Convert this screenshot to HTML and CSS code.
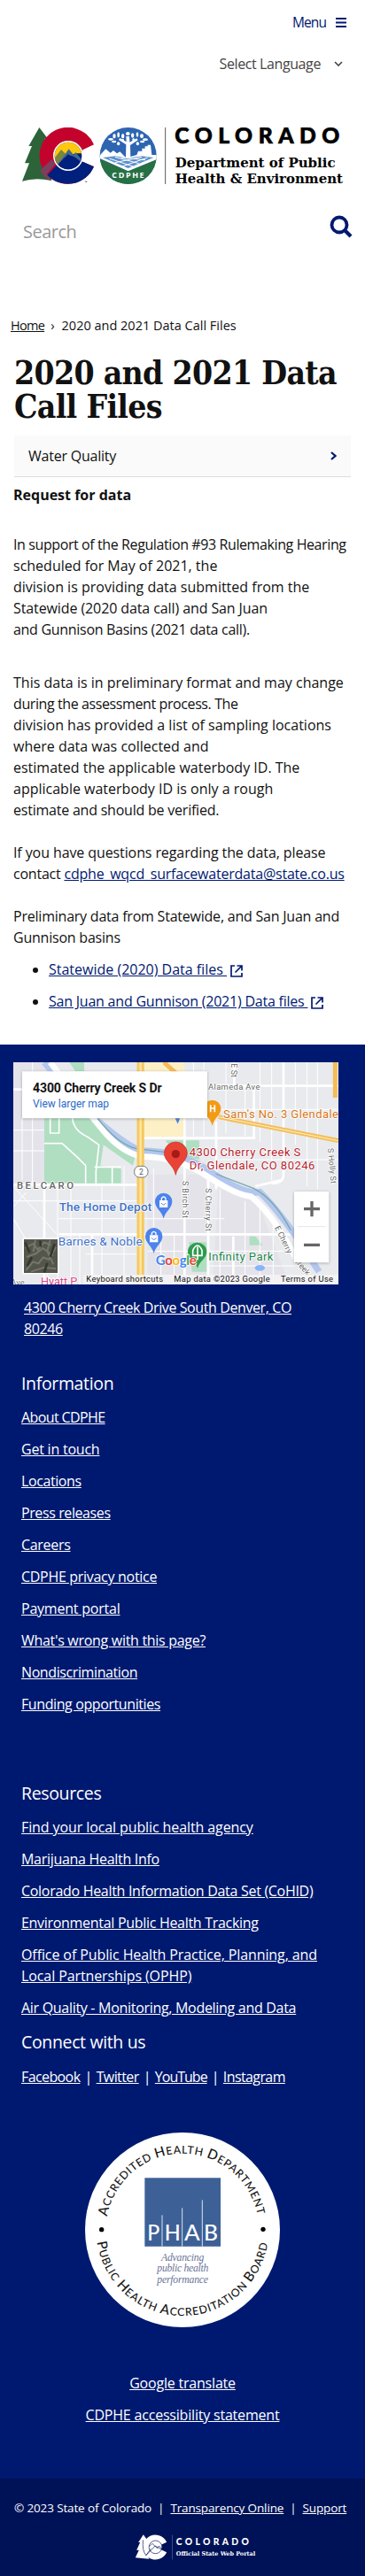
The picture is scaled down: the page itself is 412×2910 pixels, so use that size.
FILE: index.html
```html
<!DOCTYPE html>
<html lang="en">
<head>
<meta charset="utf-8">
<title>2020 and 2021 Data Call Files</title>
<link rel="stylesheet" href="styles.css">
</head>
<body>
<header class="header">
  <div class="menu"><span>Menu</span>
    <svg width="12" height="11" viewBox="0 0 12 11"><path d="M0 1h12M0 5.5h12M0 10h12" stroke="#001970" stroke-width="2"/></svg>
  </div>
  <div class="language"><span>Select Language</span>
    <svg width="10" height="6" viewBox="0 0 10 6"><path d="M1 1l4 4 4-4" fill="none" stroke="#444" stroke-width="1.6"/></svg>
  </div>
  <svg class="logo" viewBox="72 432 1095 195" width="365" height="65">
    <path d="M133 432L162 470 151 470 168 510 159 512 180 560 174 612 Q120 600 75 614L99 553H84L108 495H97Z" fill="#2d6338"/>
    <path d="M318 490A96 96 0 1 0 318 565L275 546L280 508Z" fill="#c4032d"/>
    <path d="M318 565A96 96 0 0 1 160 593L231 520L275 546Z" fill="#00207e"/>
    <path d="M135 578L175 540 187 556 158 590 175 612 155 604Z" fill="#7b405f"/>
    <circle cx="231" cy="528" r="51" fill="#fff"/>
    <clipPath id="sun"><circle cx="231" cy="528" r="46"/></clipPath>
    <g clip-path="url(#sun)"><path d="M180 480h100v100H180z" fill="#00207e"/><path d="M180 470h100v50l-25 0-25 10-50 15z" fill="#fec80d"/><path d="M180 542L207 507 225 524 192 562Z" fill="#79863e"/><path d="M192 562L233 505 250 526 256 516 282 548 270 545 256 534 231 522Z" fill="#416b8d"/><path d="M190 565L231 521 290 568V590H190Z" fill="#00207e"/></g>
    <text x="287" y="621" class="lato" font-size="10">™</text>
    <circle cx="434" cy="528" r="96" fill="#2d65b1"/>
    <clipPath id="seal"><circle cx="434" cy="528" r="96"/></clipPath>
    <g clip-path="url(#seal)">
      <path d="M335 537L434 579 533 537V630H335Z" fill="#267044"/>
      <path d="M340 524L358 505 374 518 384 510 396 520 406 514 426 534 427 490 402 474 406 468 428 481 427 462H438L439 482 463 469 467 475 441 492 442 531 463 525 468 512H481V503H491V496H500V491L510 491 514 525H531V540L434 580 337 536Z" fill="#fff"/>
      <path d="M348 534L434 570 520 534 480 529 434 536 390 529Z" fill="#5d91cc"/>
      <path d="M370 537L450 564M390 532L470 554M410 534L492 542M500 534L414 564M480 532L390 551" stroke="#fff" stroke-width="3"/>
      <g fill="#fff"><ellipse cx="375" cy="472" rx="9" ry="4"/><ellipse cx="387" cy="461" rx="5" ry="8"/><ellipse cx="401" cy="457" rx="4" ry="9"/><ellipse cx="416" cy="461" rx="5" ry="8"/><ellipse cx="433" cy="453" rx="7" ry="6"/><ellipse cx="449" cy="459" rx="5" ry="8"/><ellipse cx="465" cy="456" rx="4" ry="8"/><ellipse cx="480" cy="461" rx="6" ry="7"/><ellipse cx="492" cy="473" rx="9" ry="4"/><ellipse cx="386" cy="480" rx="8" ry="4"/><ellipse cx="401" cy="487" rx="5" ry="6"/><ellipse cx="466" cy="487" rx="5" ry="6"/><ellipse cx="482" cy="480" rx="8" ry="4"/><ellipse cx="416" cy="476" rx="4" ry="6"/><ellipse cx="452" cy="474" rx="4" ry="6"/></g>
    </g>
    <text x="379" y="602" class="sans bold" font-size="27" fill="#fff" textLength="109">CDPHE</text>
    <path d="M560 432V624" stroke="#58595b" stroke-width="3"/>
    <text x="592" y="486" class="lato" font-size="74" stroke="#000" stroke-width="2" textLength="558">COLORADO</text>
    <text x="593" y="566" class="slab" font-size="47" textLength="543" lengthAdjust="spacingAndGlyphs">Department of Public</text>
    <text x="593" y="622" class="slab" font-size="47" textLength="568" lengthAdjust="spacingAndGlyphs">Health &amp; Environment</text>
  </svg>
  <div class="search"><span>Search</span>
    <svg width="26" height="26" viewBox="0 0 26 26"><circle cx="11" cy="11" r="8.5" fill="none" stroke="#001970" stroke-width="3.8"/><path d="M17 17L24 24" stroke="#001970" stroke-width="4.2"/></svg>
  </div>
</header>
<main class="main">
  <nav class="crumbs"><a>Home</a><span class="sep">›</span><span>2020 and 2021 Data Call Files</span></nav>
  <h1 class="title">2020 and 2021 Data<br>Call Files</h1>
  <div class="accordion"><span class="t2">Water Quality</span>
    <svg width="7" height="10" viewBox="0 0 7 10"><path d="M1 1l4.5 4L1 9" fill="none" stroke="#001970" stroke-width="2.2"/></svg>
  </div>
  <h2 class="subtitle">Request for data</h2>
  <p class="para intro"><span class="t4">In support of the Regulation #93 Rulemaking Hearing</span><br>scheduled for May of 2021, the<br>division is providing data submitted from the<br><span class="t1">Statewide (2020 data call) and San Juan</span><br><span class="t3">and Gunnison Basins (2021 data call).</span></p>
  <p class="para">This data is in preliminary format and may change<br><span class="t4">during the assessment process. The</span><br>division has provided a list of sampling locations<br>where data was collected and<br>estimated the applicable waterbody ID. The<br>applicable waterbody ID is only a rough<br><span class="t2">estimate and should be verified.</span></p>
  <p class="para"><span class="t1">If you have questions regarding the data, please</span><br><span class="t2">contact <a class="mail">cdphe_wqcd_surfacewaterdata@state.co.us</a></span></p>
  <p class="para last"><span class="t2">Preliminary data from Statewide, and San Juan and</span><br><span class="t2">Gunnison basins</span></p>
  <ul class="files">
    <li><a>Statewide (2020) Data files&nbsp;</a><svg class="ext" viewBox="0 0 14 14"><path d="M5 1H1V13H13V9M7.5 1H13V6.5M13 1L5.5 8.5" fill="none" stroke="#001970" stroke-width="1.7"/></svg></li>
    <li><a class="t2">San Juan and Gunnison (2021) Data files&nbsp;</a><svg class="ext" viewBox="0 0 14 14"><path d="M5 1H1V13H13V9M7.5 1H13V6.5M13 1L5.5 8.5" fill="none" stroke="#001970" stroke-width="1.7"/></svg></li>
  </ul>
</main>
<footer class="footer">
  <svg class="map" viewBox="45 30 1101 753" width="367" height="251">
    <path d="M45 30h1101v753H45z" fill="#e8eaed"/>
    <path d="M45 30h110L310 230H150V440H45zM500 410H700V783H500zM740 440L860 470 980 783H720z" fill="#e5e3ea"/>
    <path d="M485 30h140v255H485z" fill="#fdf0c7"/>
    <path d="M150 215H300L460 340 450 380 350 310 340 380 410 390V440H280L150 440ZM235 30h50v30h-30zM560 295H675V360L600 345ZM640 640H700V740H650ZM845 620h20l25 30h-45z" fill="#afdec1"/>
    <g stroke="#fff" fill="none">
      <path stroke-width="3" d="M75 220V430M110 30V440M195 440V783M240 450V783M270 610V783M345 440V783M420 380V783M520 390V610M545 610V783M590 610V783M655 30V280M690 30V280M765 30V270M830 110V280M880 30V300M920 30V430M1000 30V310M1040 30V450M1075 30V460M745 460V783M830 500V783M880 500V783M925 560V783M45 260H150M45 330H150M45 500H480M480 560H760M290 680H480M500 670H960M740 190H1146M740 360H1146M200 560H480M700 720H1000M45 450L190 610M45 560L180 783M90 470L45 520"/>
      <path stroke-width="8" d="M150 440V783M312 610V783M625 215V783M732 230V460M705 420V783M793 30V110M790 620V783M860 110V285M960 30V410Q960 440 920 440M45 445H480M200 613H990M485 287H865M740 110H1146M45 122H80M865 450L950 430"/>
      <path stroke-width="5" d="M150 305H210L260 350 290 380V440M245 215Q245 260 300 285L335 310 325 400V440M170 220V270H200V215M320 385H410M380 385V440"/>
    </g>
    <path d="M150 30Q260 170 350 245T480 330Q610 330 720 405T880 470Q970 560 1080 740" fill="none" stroke="#b3c7ee" stroke-width="22"/>
    <path d="M170 30Q290 190 350 262T480 350Q600 350 700 415T850 485Q930 550 1010 710" fill="none" stroke="#fff" stroke-width="20"/>
    <path d="M330 220Q400 308 460 322L560 335M730 408L860 458Q930 495 985 600" fill="none" stroke="#76a6ac" stroke-width="4"/>
    <path d="M476 30V783" stroke="#f6c964" stroke-width="25"/><path d="M476 30V783" stroke="#ffe7a0" stroke-width="7"/>
    <path d="M555 30L610 80M740 215L1146 296M1135 30V150" stroke="#f5bd57" stroke-width="15" fill="none"/><path d="M740 215L1146 296" stroke="#fff2c4" stroke-width="3"/>
    <ellipse cx="880" cy="727" rx="17" ry="10" fill="#8ab4f8"/>
    <rect x="455" y="382" width="46" height="38" rx="17" fill="#fff" stroke="#777" stroke-width="3"/>
    <g class="map-text" stroke="#fff" stroke-width="5" paint-order="stroke" stroke-linejoin="round">
      <text x="471" y="411" font-size="26" fill="#555">2</text>
      <text x="57" y="459" class="medium" font-size="34" fill="#666" textLength="192">BELCARO</text>
      <text x="705" y="123" font-size="28" fill="#666" textLength="175">Alameda Ave</text>
      <text x="756" y="219" font-size="39" fill="#d87516" textLength="390">Sam's No. 3 Glendale</text>
      <text x="641" y="349" font-size="39" fill="#b91c2b" textLength="377">4300 Cherry Creek S</text>
      <text x="641" y="392" font-size="39" fill="#b91c2b" textLength="425">Dr, Glendale, CO 80246</text>
      <text x="200" y="533" class="medium" font-size="41" fill="#3f71c9" textLength="314">The Home Depot</text>
      <text x="197" y="650" font-size="41" fill="#3f71c9" textLength="285">Barnes &amp; Noble</text>
      <text x="706" y="702" font-size="39" fill="#21864b" textLength="219">Infinity Park</text>
      <text x="138" y="786" font-size="38" fill="#d8478b">Hyatt P</text>
      <text transform="translate(617 432) rotate(90)" font-size="27" fill="#666" textLength="126">S Birch St</text>
      <text transform="translate(696 457) rotate(90)" font-size="27" fill="#666" textLength="145">S Cherry St</text>
      <text transform="translate(1110 322) rotate(85)" font-size="27" fill="#666" textLength="120">S Holly St</text>
      <text transform="translate(783 34) rotate(90)" font-size="27" fill="#666">E St</text>
      <text transform="translate(930 590) rotate(64)" font-size="27" fill="#666" textLength="100">E Cherry</text>
      <text transform="translate(993 702) rotate(48)" font-size="27" fill="#666">Creek</text>
      <text x="37" y="785" font-size="28" fill="#777">Ave</text>
    </g>
    <path d="M595 412C590 380 556 365 556 338A39 38 0 0 1 634 338C634 365 600 380 595 412Z" fill="#e94335" stroke="#c9302a" stroke-width="2"/><circle cx="595" cy="341" r="14" fill="#a51c16"/>
    <g fill="#4c83ec"><path d="M554 560C548 535 525 525 525 502A29 29 0 0 1 583 502C583 525 560 535 554 560ZM521 678C515 652 492 642 492 620A29 29 0 0 1 550 620C550 642 527 652 521 678ZM591 215h20l-9 24z"/></g>
    <g fill="#fff"><path d="M540 498h28v24h-28zM507 616h28v24h-28z"/><path d="M547 498v-7q7-10 14 0v7M514 616v-7q7-10 14 0v7" fill="none" stroke="#fff" stroke-width="4"/></g>
    <path d="M546 507q8 12 16 0M513 625q8 12 16 0" fill="none" stroke="#4c83ec" stroke-width="3"/>
    <path d="M719 246C713 218 690 210 690 187A29 29 0 0 1 748 187C748 210 725 218 719 246Z" fill="#f39b14"/><path d="M713 175v24M727 175v24M711 186h18" stroke="#fff" stroke-width="5"/>
    <path d="M669 728C662 703 636 695 636 672A32 31 0 0 1 700 672C700 695 676 703 669 728Z" fill="#2d9b4d"/><path d="M669 700V655M653 685v-18q16-32 31 0v18z" fill="none" stroke="#fff" stroke-width="5"/>
    <text x="527" y="716" class="google" font-size="45" textLength="138" stroke="#fff" stroke-width="4" paint-order="stroke"><tspan fill="#4285f4">G</tspan><tspan fill="#ea4335">o</tspan><tspan fill="#fbbc05">o</tspan><tspan fill="#4285f4">g</tspan><tspan fill="#34a853">l</tspan><tspan fill="#ea4335">e</tspan></text>
    <path d="M75 61h627v159H75z" fill="#fff" class="shadow"/>
    <text x="111" y="132" class="map-text bold" font-size="42" textLength="437" fill="#111">4300 Cherry Creek S Dr</text>
    <text x="111" y="183" class="map-text" font-size="36" textLength="258" fill="#2a68c8">View larger map</text>
    <path d="M996 468h118v241H996z" fill="#fff" class="shadow"/><path d="M1008 587h94" stroke="#e6e6e6" stroke-width="3"/><path d="M1029 527h54M1056 501v52M1029 649h54" stroke="#666" stroke-width="10"/>
    <path d="M76 625h124v123H76z" fill="#fff"/><path d="M81 630h114v114H81z" fill="#55564b"/>
    <path d="M88 735L112 706 130 712 146 691 165 698 190 656M85 660L112 645 128 665 150 640 173 650M90 690L122 678 145 660 180 685M105 740L150 725 190 730M120 632L113 672M170 632L160 670 181 715" stroke="#76776c" stroke-width="6" fill="none"/><path d="M85 640L100 675M136 635L138 655M185 645L170 690M92 720L108 690M150 742L160 710" stroke="#34382f" stroke-width="8"/>
    <path d="M283 750h863v33H283z" fill="#f4f4f5" opacity=".88"/>
    <g class="map-text" font-size="28" fill="#111"><text x="292" y="773" textLength="260">Keyboard shortcuts</text><text x="589" y="773" textLength="325">Map data ©2023 Google</text><text x="951" y="773" textLength="177">Terms of Use</text></g>
  </svg>
  <a class="address t4">4300 Cherry Creek Drive South Denver, CO<br>80246</a>
  <section class="links info">
    <h3>Information</h3>
    <a class="t6">About CDPHE</a><a class="t2">Get in touch</a><a class="t4">Locations</a><a class="t4">Press releases</a><a class="t3">Careers</a><a class="t3">CDPHE privacy notice</a><a class="t2">Payment portal</a><a class="t3">What's wrong with this page?</a><a class="t4">Nondiscrimination</a><a class="t4">Funding opportunities</a>
  </section>
  <section class="links resources">
    <h3>Resources</h3>
    <a class="t1">Find your local public health agency</a><a class="t3">Marijuana Health Info</a><a class="t3">Colorado Health Information Data Set (CoHID)</a><a class="t3">Environmental Public Health Tracking</a><a class="t1">Office of Public Health Practice, Planning, and<br>Local Partnerships (OPHP)</a><a class="t3">Air Quality - Monitoring, Modeling and Data</a>
  </section>
  <section class="connect">
    <h3>Connect with us</h3>
    <div class="social"><a>Facebook</a><i>|</i><a>Twitter</a><i>|</i><a class="narrow">YouTube</a><i>|</i><a>Instagram</a></div>
  </section>
  <svg class="phab" viewBox="78 87 660 660" width="220" height="220">
    <circle cx="408" cy="417" r="330" fill="#fff"/>
    <path id="arc-top" d="M153 372A259 259 0 0 1 663 372" fill="none"/>
    <path id="arc-bottom" d="M119 458A292 292 0 0 0 697 458" fill="none"/>
    <g class="lato-regular" fill="#171717">
      <text font-size="37"><textPath href="#arc-top" textLength="716"><tspan font-size="46">A</tspan>CCREDITED <tspan font-size="46">H</tspan>EALTH <tspan font-size="46">D</tspan>EPARTMENT</textPath></text>
      <text font-size="37"><textPath href="#arc-bottom" textLength="828"><tspan font-size="46">P</tspan>UBLIC <tspan font-size="46">H</tspan>EALTH <tspan font-size="46">A</tspan>CCREDITATION <tspan font-size="46">B</tspan>OARD</textPath></text>
    </g>
    <circle cx="134" cy="416" r="8"/><circle cx="681" cy="415" r="8"/>
    <path d="M280 241h257v232H280z" fill="#3d6197"/>
    <path d="M339 367V473M407 343V473M475 316V473" stroke="#d8e1ee" stroke-width="3"/>
    <g class="lato-regular" fill="#fff" font-size="73"><text x="289" y="453" textLength="42" lengthAdjust="spacingAndGlyphs">P</text><text x="347" y="453" textLength="54" lengthAdjust="spacingAndGlyphs">H</text><text x="414" y="453" textLength="53" lengthAdjust="spacingAndGlyphs">A</text><text x="480" y="453" textLength="48" lengthAdjust="spacingAndGlyphs">B</text></g>
    <g class="motto" font-size="35"><text x="336" y="521" textLength="145">Advancing</text><text x="322" y="559" textLength="174">public health</text><text x="322" y="597" textLength="173">performance</text></g>
  </svg>
  <div class="extra"><a>Google translate</a><a>CDPHE accessibility statement</a></div>
  <div class="bottom">
    <div class="copyright"><span>© 2023 State of Colorado</span><i>|</i><a>Transparency Online</a><i>|</i><a>Support</a></div>
    <svg class="portal" viewBox="456 611 410 87" width="137" height="29">
      <path d="M485 612L500 633 491 670 505 694 458 690 470 664H462L474 638H468Z" fill="#fff"/>
      <path d="M564 637A42 42 0 1 0 564 672L545 663V646Z" fill="#fff"/>
      <circle cx="526" cy="654" r="22" fill="#fff" stroke="#001257" stroke-width="2"/><path d="M484 630Q480 665 494 682L525 650 547 662M505 652L515 642 532 658 538 650 548 660M494 682L510 660" fill="none" stroke="#001257" stroke-width="2"/>
      <path d="M583 613V696" stroke="#59658f" stroke-width="2"/>
      <text x="596" y="647" class="lato" font-size="31" fill="#fff" textLength="246">COLORADO</text>
      <text x="596" y="682" class="slab" font-size="20" fill="#fff" textLength="268" lengthAdjust="spacingAndGlyphs">Official State Web Portal</text>
    </svg>
  </div>
</footer>
</body>
</html>
```

FILE: styles.css
```css
* { box-sizing: border-box; }
body { margin: 0; width: 412px; background: #fff; color: #111; font: 16px/24px "Open Sans", "Noto Sans", sans-serif; white-space: nowrap; }
svg { display: block; flex: none; }
h1, h2, h3, p, ul { margin: 0; padding: 0; }
i { font-style: normal; }

.t1 { letter-spacing: -.1px; }
.t2 { letter-spacing: -.22px; }
.t3 { letter-spacing: -.3px; }
.t4 { letter-spacing: -.4px; }
.t6 { letter-spacing: -.6px; }

.lato { font-family: Lato, sans-serif; font-weight: 900; }
.lato-regular { font-family: Lato, sans-serif; font-weight: 500; }
.slab { font-family: "DejaVu Serif", serif; font-weight: 700; font-stretch: 75%; }
.bold { font-weight: 700; }
.medium { font-weight: 500; }
.sans { font-family: "Open Sans", sans-serif; }
.google { font-family: Lato, sans-serif; font-weight: 700; }
.motto { font-family: "Liberation Serif", serif; font-style: italic; fill: #6a7398; }
.map-text { font-family: Roboto, sans-serif; }
.shadow { filter: drop-shadow(0 2px 4px rgba(0, 0, 0, .3)); }

.header { height: 352px; padding-top: 12px; }
.menu { display: flex; align-items: center; justify-content: flex-end; gap: 11px; padding-right: 21px; height: 26px; color: #001970; font-size: 15.5px; letter-spacing: -.9px; }
.language { display: flex; align-items: center; justify-content: flex-end; gap: 15px; padding-right: 25px; height: 24px; margin-top: 22px; color: #444; letter-spacing: -.4px; }
.logo { margin: 60px 0 0 24px; }
.search { display: flex; align-items: flex-start; justify-content: space-between; padding: 0 14px 0 26px; margin-top: 34px; color: #999; font-size: 20px; line-height: 38px; letter-spacing: -.5px; }

.main { height: 828px; padding: 4px 16px 0; }
.crumbs { margin: 0 0 0 -4px; display: flex; font-size: 14.5px; }
.crumbs a, .footer a, .files a, .mail { text-decoration: underline; }
.crumbs a { letter-spacing: -.7px; }
.crumbs .sep { margin: 0 8px 0 7px; }
.title { margin-top: 22px; font: 700 37px/38px "DejaVu Serif", serif; font-stretch: 75%; letter-spacing: -.7px; }
.accordion { height: 47px; margin-top: 14px; padding: 0 16px; display: flex; align-items: center; justify-content: space-between; background: #fafafa; border-bottom: 1px solid #ddd; }
.subtitle { margin: 8px 0 0 -1px; font-size: 16px; line-height: 24px; }
.para { margin: 0 0 24px -1px; }
.intro { margin: 32px 0 36px -1px; }
.para.last { margin-bottom: 12px; }
.mail, .files a { color: #001970; }
.files { padding-left: 39px; }
.files li { margin-bottom: 12px; }
.ext { display: inline-block; width: 14px; height: 14px; margin-left: 4px; vertical-align: -3px; }

.footer { height: 1730px; padding-top: 20px; background: #001970; color: #fff; }
.map { margin-left: 15px; }
.address { display: block; margin: 14px 0 0 27px; }
.links { display: flex; flex-direction: column; align-items: flex-start; gap: 12px; padding-left: 24px; }
.links h3, .connect h3 { font-size: 19.5px; line-height: 28px; font-weight: 400; letter-spacing: -.35px; }
.info { margin-top: 36px; }
.resources { margin-top: 75px; }
.connect { margin-top: 13px; padding-left: 24px; }
.social { display: flex; margin-top: 13px; letter-spacing: -.6px; }
.social .narrow { letter-spacing: -1px; }
.social i { margin: 0 5px; }
.phab { margin: 51px 0 0 96px; }
.extra { display: flex; flex-direction: column; align-items: center; gap: 12px; margin-top: 51px; letter-spacing: -.2px; }
.bottom { height: 110px; margin-top: 60px; padding: 21px 0 0 16px; background: #001257; }
.copyright { display: flex; font-size: 13.5px; letter-spacing: -.14px; }
.copyright i { margin: 0 7px; }
.portal { margin: 18px 0 0 136px; }
```
